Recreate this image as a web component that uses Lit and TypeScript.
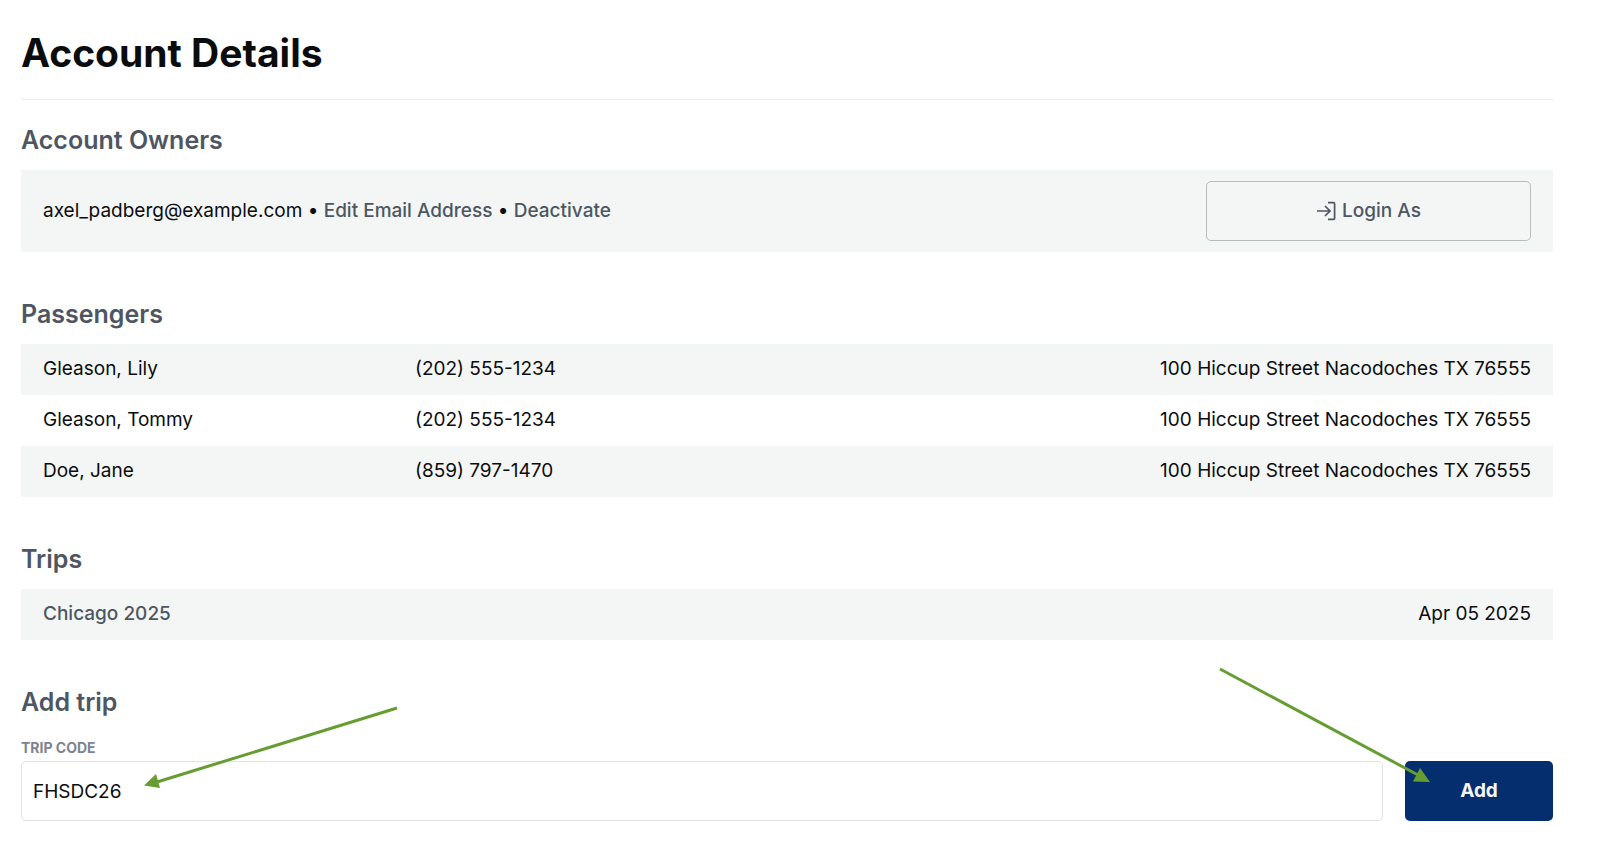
import { LitElement, html, css } from "lit";
import { customElement, property, state } from "lit/decorators.js";

interface Passenger {
  name: string;
  phone: string;
  address: string;
}

interface Trip {
  name: string;
  date: string;
}

@customElement("app-root")
export class AppRoot extends LitElement {
  static styles = css`
    :host {
      display: block;
      box-sizing: border-box;
      padding: 27px 47px 36px 21px;
      background: #fff;
      color: #0a0c0e;
      font: 400 19px/26px Inter, sans-serif;
    }
    *,
    *::before,
    *::after {
      box-sizing: border-box;
    }
    h1 {
      margin: 0;
      padding-bottom: 20px;
      border-bottom: 1px solid #e9ebec;
      font-size: 39px;
      font-weight: 700;
      line-height: 52px;
    }
    section {
      margin-top: 44px;
    }
    h1 + section {
      margin-top: 22px;
    }
    h2 {
      margin: 0 0 12px;
      color: #4d5662;
      font-size: 25px;
      font-weight: 600;
      line-height: 36px;
    }
    a {
      color: #4d5662;
      font-weight: 500;
      text-decoration: none;
    }
    .owner {
      display: flex;
      align-items: center;
      justify-content: space-between;
      padding: 11px 22px;
      background: #f4f6f5;
    }
    .login {
      display: flex;
      align-items: center;
      justify-content: center;
      gap: 6px;
      width: 325px;
      height: 60px;
      border: 1px solid #b9bcbc;
      border-radius: 5px;
      background: none;
      color: #4d5662;
      font: inherit;
      font-weight: 500;
    }
    .login svg {
      width: 20px;
      height: 20px;
    }
    table,
    tbody {
      display: block;
      width: 100%;
    }
    tr {
      display: grid;
      grid-template-columns: 1fr 1fr 2fr;
      padding: 12px 22px 13px;
    }
    .trips tr {
      grid-template-columns: 1fr 1fr;
    }
    tr:nth-child(odd) {
      background: #f4f6f5;
    }
    td {
      padding: 0;
    }
    td:last-child {
      text-align: right;
    }
    form {
      display: grid;
      grid-template-columns: 1fr 148px;
      column-gap: 22px;
      margin-top: 18px;
    }
    label {
      grid-column: 1 / -1;
      padding-bottom: 3px;
      color: #7c8491;
      font-size: 14px;
      font-weight: 700;
      line-height: 20px;
    }
    .target {
      position: relative;
    }
    input,
    .add {
      display: block;
      width: 100%;
      height: 60px;
      border-radius: 5px;
      font: inherit;
    }
    input {
      padding: 0 11px;
      border: 1px solid #e0e2e3;
      background: #fff;
      color: #0a0c0e;
    }
    .add {
      border: 0;
      background: #042e6d;
      color: #f4f6f8;
      font-weight: 700;
    }
    .arrow {
      position: absolute;
      pointer-events: none;
      overflow: visible;
      fill: #659d33;
      stroke: #659d33;
    }
    .arrow path {
      stroke: none;
    }
    .to-code {
      left: 123px;
      bottom: 35px;
      width: 253px;
      height: 78px;
    }
    .to-add {
      right: 123px;
      bottom: 39px;
      width: 210px;
      height: 113px;
    }
  `;

  @property({ attribute: false }) passengers: Passenger[] = [
    { name: "Gleason, Lily", phone: "(202) 555-1234", address: "100 Hiccup Street Nacodoches TX 76555" },
    { name: "Gleason, Tommy", phone: "(202) 555-1234", address: "100 Hiccup Street Nacodoches TX 76555" },
    { name: "Doe, Jane", phone: "(859) 797-1470", address: "100 Hiccup Street Nacodoches TX 76555" },
  ];

  @property({ attribute: false }) trips: Trip[] = [{ name: "Chicago 2025", date: "Apr 05 2025" }];

  @state() private code = "FHSDC26";

  private onInput(e: Event) {
    this.code = (e.target as HTMLInputElement).value;
  }

  render() {
    return html`
      <h1>Account Details</h1>

      <section>
        <h2>Account Owners</h2>
        <div class="owner">
          <div>
            axel_padberg@example.com • <a href="#email">Edit Email Address</a> •
            <a href="#deactivate">Deactivate</a>
          </div>
          <button class="login" type="button">
            <svg viewBox="0 0 20 20" fill="none" stroke="currentColor" stroke-width="1.7" aria-hidden="true">
              <path d="M1 10h12.5M9 5l5 5-5 5M12 1.6h5.4q1.2 0 1.2 1.2v14.4q0 1.2-1.2 1.2H12" />
            </svg>
            Login As
          </button>
        </div>
      </section>

      <section>
        <h2>Passengers</h2>
        <table>
          <tbody>
            ${this.passengers.map(
              (p) => html`<tr>
                <td>${p.name}</td>
                <td>${p.phone}</td>
                <td>${p.address}</td>
              </tr>`
            )}
          </tbody>
        </table>
      </section>

      <section>
        <h2>Trips</h2>
        <table class="trips">
          <tbody>
            ${this.trips.map(
              (t) => html`<tr>
                <td><a href="#trip">${t.name}</a></td>
                <td>${t.date}</td>
              </tr>`
            )}
          </tbody>
        </table>
      </section>

      <section>
        <h2>Add trip</h2>
        <form @submit=${(e: Event) => e.preventDefault()}>
          <label for="code">TRIP CODE</label>
          <div class="target">
            <input id="code" type="text" autocomplete="off" .value=${this.code} @input=${this.onInput} />
            <svg class="arrow to-code" viewBox="0 0 253 78" aria-hidden="true">
              <line x1="253" y1="0" x2="13" y2="74" stroke-width="3" />
              <path d="M0 77.500L12 66L16 80z" />
            </svg>
          </div>
          <div class="target">
            <button class="add" type="submit">Add</button>
            <svg class="arrow to-add" viewBox="0 0 210 113" aria-hidden="true">
              <line x1="0" y1="0" x2="198" y2="106" stroke-width="3" />
              <path d="M210 113L200 99L193 112.500z" />
            </svg>
          </div>
        </form>
      </section>
    `;
  }
}
